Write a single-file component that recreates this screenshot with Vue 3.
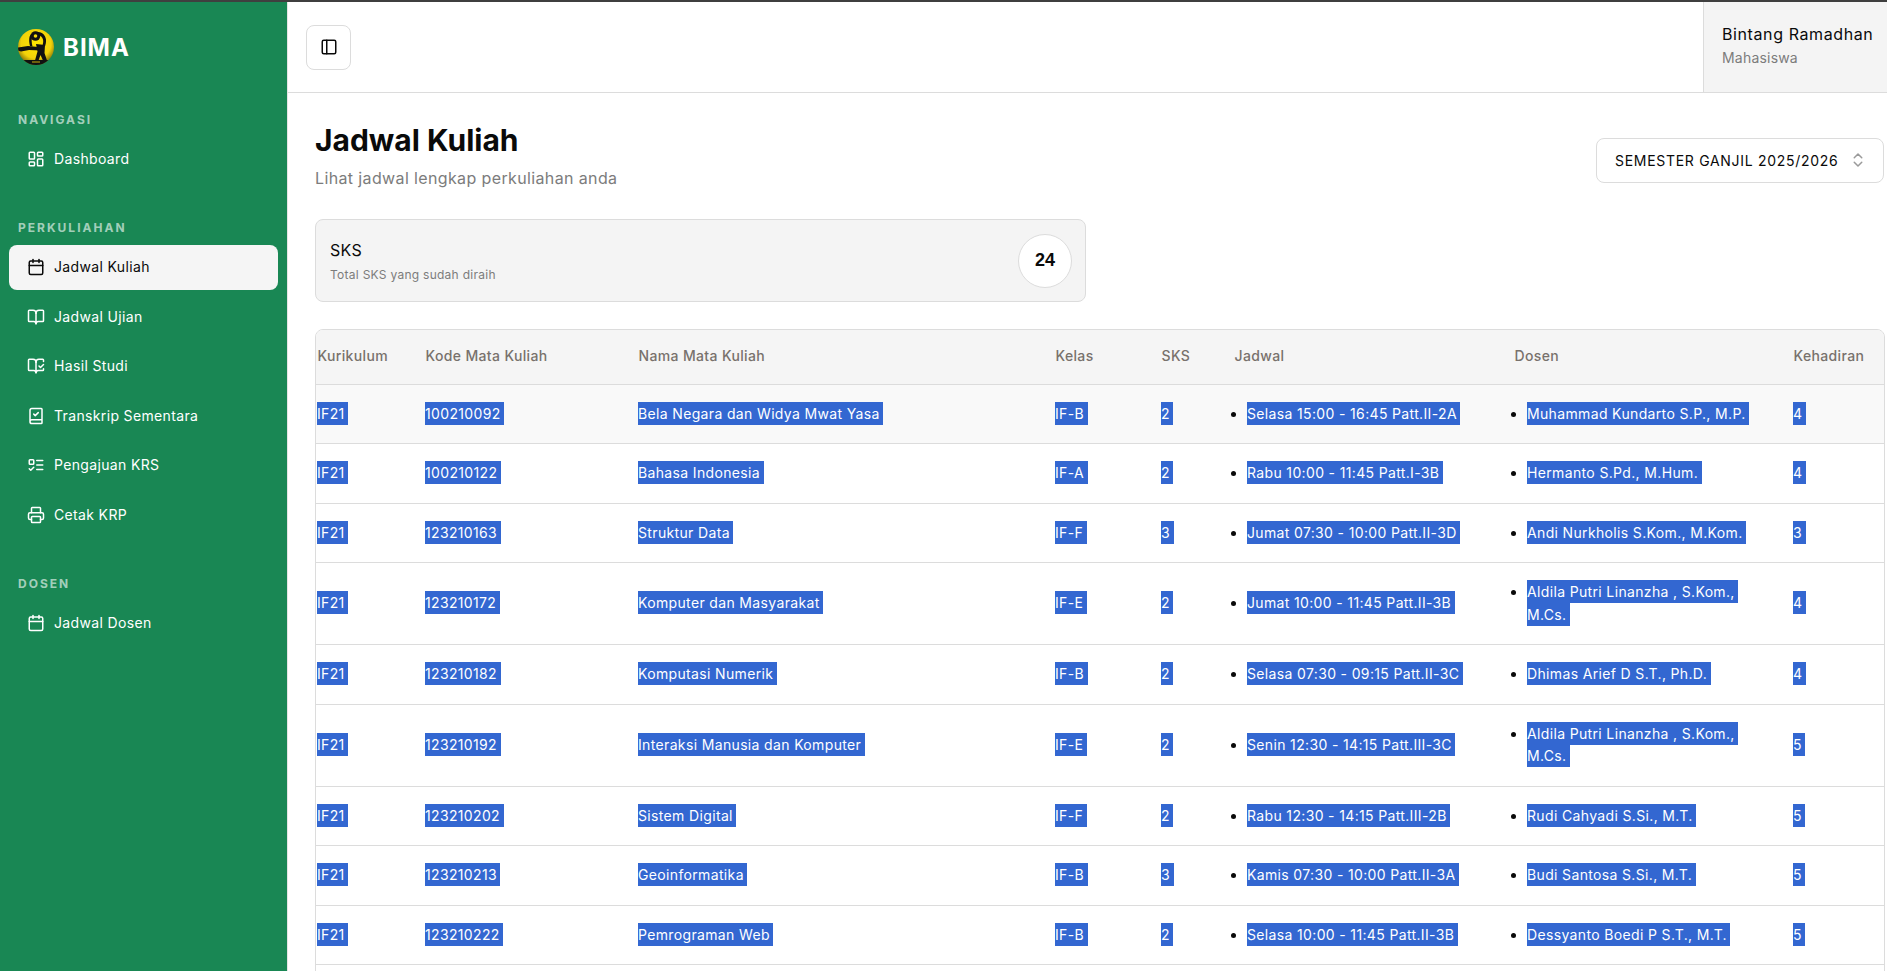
<template>
  <div class="shell">
    <aside class="sidebar">
      <div class="brand">
        <svg class="logo" viewBox="0 0 36 36">
          <defs>
            <radialGradient id="sun" cx="50%" cy="40%" r="58%">
              <stop offset="0%" stop-color="#ffe600" />
              <stop offset="72%" stop-color="#f2d20a" />
              <stop offset="100%" stop-color="#8f7c08" />
            </radialGradient>
            <clipPath id="disc">
              <circle cx="18" cy="18" r="18" />
            </clipPath>
          </defs>
          <circle cx="18" cy="18" r="18" fill="url(#sun)" />
          <g clip-path="url(#disc)" fill="#111">
            <circle cx="17.500" cy="7" r="4.800" />
            <path d="M13 5c-2.500 3-2 8 -1 12l2.500 .5c-1 -4 -1.500 -8 .5 -11z" />
            <path d="M20 3c4 0 7.500 3 8 7.500c.3 3 -.5 5 -1 7l-2.500 -1c.5 -2 1 -4 .5 -6c-.6 -2.500 -3 -4.500 -5.500 -5z" />
            <path d="M0 18.500l10 -1.500l10 1l3 3.500l-12 -.5l-8 1.500l-3 -1z" />
            <path d="M18 15l9 1l-.5 8l2.500 7.500h-4l-2.500 -5.500l-2 5.500h-3.500l2.500 -9z" />
            <rect x="0" y="31" width="36" height="5" />
          </g>
          <circle cx="17.500" cy="7" r="1.800" fill="#f5d90a" />
          <rect x="14" y="32.500" width="8" height="1" fill="#c9ad0a" />
        </svg>
        <span class="brand-name">BIMA</span>
      </div>
      <section v-for="group in menu" :key="group.title" class="nav-group">
        <div class="nav-title">{{ group.title }}</div>
        <a v-for="item in group.items" :key="item.label" class="nav-item" :class="{ active: item.active }">
          <svg class="icon" viewBox="0 0 24 24">
            <template v-for="(s, i) in item.icon" :key="i">
              <rect v-if="s.length === 5" :x="s[0]" :y="s[1]" :width="s[2]" :height="s[3]" :rx="s[4]" />
              <path v-else :d="s" />
            </template>
          </svg>
          <span>{{ item.label }}</span>
        </a>
      </section>
    </aside>

    <div class="main">
      <header class="topbar">
        <button class="toggle">
          <svg class="icon" viewBox="0 0 24 24">
            <rect x="3" y="3" width="18" height="18" rx="2" />
            <path d="M9 3v18" />
          </svg>
        </button>
        <div class="user">
          <div class="user-name">Bintang Ramadhan</div>
          <div class="user-role">Mahasiswa</div>
        </div>
      </header>

      <main class="content">
        <div class="page-head">
          <div>
            <h1>Jadwal Kuliah</h1>
            <p>Lihat jadwal lengkap perkuliahan anda</p>
          </div>
          <button class="semester">
            <span>SEMESTER GANJIL 2025/2026</span>
            <svg class="chev" viewBox="0 0 24 24">
              <path d="m7 15 5 5 5-5" />
              <path d="m7 9 5-5 5 5" />
            </svg>
          </button>
        </div>

        <div class="sks-card">
          <div>
            <div class="sks-title">SKS</div>
            <div class="sks-sub">Total SKS yang sudah diraih</div>
          </div>
          <div class="sks-count">24</div>
        </div>

        <div class="table-card">
          <table>
            <colgroup>
              <col v-for="w in colWidths" :key="w.key" :style="{ width: w.value + 'px' }" />
            </colgroup>
            <thead>
              <tr>
                <th v-for="h in headers" :key="h">{{ h }}</th>
              </tr>
            </thead>
            <tbody>
              <tr v-for="(row, i) in rows" :key="row.kode" :class="{ hover: i === 0 }">
                <td><span class="sel">IF21</span></td>
                <td><span class="sel">{{ row.kode }}</span></td>
                <td><span class="sel">{{ row.nama }}</span></td>
                <td><span class="sel">{{ row.kelas }}</span></td>
                <td><span class="sel">{{ row.sks }}</span></td>
                <td><ul><li><span class="sel">{{ row.jadwal }}</span></li></ul></td>
                <td><ul><li><span class="sel">{{ row.dosen }}</span></li></ul></td>
                <td><span class="sel">{{ row.hadir }}</span></td>
              </tr>
              <tr class="spacer"><td colspan="8"></td></tr>
            </tbody>
          </table>
        </div>
      </main>
    </div>
  </div>
</template>

<script setup>
const calendar = ['M8 2v4', 'M16 2v4', [3, 4, 18, 18, 2], 'M3 10h18']

const menu = [
  {
    title: 'NAVIGASI',
    items: [
      { label: 'Dashboard', icon: [[3, 3, 7, 9, 1], [14, 3, 7, 5, 1], [14, 12, 7, 9, 1], [3, 16, 7, 5, 1]] }
    ]
  },
  {
    title: 'PERKULIAHAN',
    items: [
      { label: 'Jadwal Kuliah', active: true, icon: calendar },
      {
        label: 'Jadwal Ujian',
        icon: ['M12 7v14', 'M3 18a1 1 0 0 1-1-1V4a1 1 0 0 1 1-1h5a4 4 0 0 1 4 4 4 4 0 0 1 4-4h5a1 1 0 0 1 1 1v13a1 1 0 0 1-1 1h-6a3 3 0 0 0-3 3 3 3 0 0 0-3-3z']
      },
      {
        label: 'Hasil Studi',
        icon: ['M12 21V7', 'm16 12 2 2 4-4', 'M22 6V4a1 1 0 0 0-1-1h-5a4 4 0 0 0-4 4 4 4 0 0 0-4-4H3a1 1 0 0 0-1 1v13a1 1 0 0 0 1 1h6a3 3 0 0 1 3 3 3 3 0 0 1 3-3h6a1 1 0 0 0 1-1v-1.300']
      },
      {
        label: 'Transkrip Sementara',
        icon: ['M4 19.500v-15A2.500 2.500 0 0 1 6.500 2H19a1 1 0 0 1 1 1v18a1 1 0 0 1-1 1H6.500a1 1 0 0 1 0-5H20', 'm9 9.500 2 2 4-4']
      },
      {
        label: 'Pengajuan KRS',
        icon: [[3, 5, 6, 6, 1], 'm3 17 2 2 4-4', 'M13 6h8', 'M13 12h8', 'M13 18h8']
      },
      {
        label: 'Cetak KRP',
        icon: ['M6 18H4a2 2 0 0 1-2-2v-5a2 2 0 0 1 2-2h16a2 2 0 0 1 2 2v5a2 2 0 0 1-2 2h-2', 'M6 9V3a1 1 0 0 1 1-1h10a1 1 0 0 1 1 1v6', [6, 14, 12, 8, 1]]
      }
    ]
  },
  {
    title: 'DOSEN',
    items: [{ label: 'Jadwal Dosen', icon: calendar }]
  }
]

const headers = ['Kurikulum', 'Kode Mata Kuliah', 'Nama Mata Kuliah', 'Kelas', 'SKS', 'Jadwal', 'Dosen', 'Kehadiran']
const colWidths = [108, 213, 417, 106, 73, 280, 279, 92].map((value, key) => ({ key, value }))

const aldila = 'Aldila Putri Linanzha , S.Kom., M.Cs.'
const rows = [
  { kode: '100210092', nama: 'Bela Negara dan Widya Mwat Yasa', kelas: 'IF-B', sks: 2, jadwal: 'Selasa 15:00 - 16:45 Patt.II-2A', dosen: 'Muhammad Kundarto S.P., M.P.', hadir: 4 },
  { kode: '100210122', nama: 'Bahasa Indonesia', kelas: 'IF-A', sks: 2, jadwal: 'Rabu 10:00 - 11:45 Patt.I-3B', dosen: 'Hermanto S.Pd., M.Hum.', hadir: 4 },
  { kode: '123210163', nama: 'Struktur Data', kelas: 'IF-F', sks: 3, jadwal: 'Jumat 07:30 - 10:00 Patt.II-3D', dosen: 'Andi Nurkholis S.Kom., M.Kom.', hadir: 3 },
  { kode: '123210172', nama: 'Komputer dan Masyarakat', kelas: 'IF-E', sks: 2, jadwal: 'Jumat 10:00 - 11:45 Patt.II-3B', dosen: aldila, hadir: 4 },
  { kode: '123210182', nama: 'Komputasi Numerik', kelas: 'IF-B', sks: 2, jadwal: 'Selasa 07:30 - 09:15 Patt.II-3C', dosen: 'Dhimas Arief D S.T., Ph.D.', hadir: 4 },
  { kode: '123210192', nama: 'Interaksi Manusia dan Komputer', kelas: 'IF-E', sks: 2, jadwal: 'Senin 12:30 - 14:15 Patt.III-3C', dosen: aldila, hadir: 5 },
  { kode: '123210202', nama: 'Sistem Digital', kelas: 'IF-F', sks: 2, jadwal: 'Rabu 12:30 - 14:15 Patt.III-2B', dosen: 'Rudi Cahyadi S.Si., M.T.', hadir: 5 },
  { kode: '123210213', nama: 'Geoinformatika', kelas: 'IF-B', sks: 3, jadwal: 'Kamis 07:30 - 10:00 Patt.II-3A', dosen: 'Budi Santosa S.Si., M.T.', hadir: 5 },
  { kode: '123210222', nama: 'Pemrograman Web', kelas: 'IF-B', sks: 2, jadwal: 'Selasa 10:00 - 11:45 Patt.II-3B', dosen: 'Dessyanto Boedi P S.T., M.T.', hadir: 5 }
]
</script>

<style>
html,
body {
  margin: 0;
  overflow: hidden;
}
</style>

<style scoped>
.shell {
  display: flex;
  height: 971px;
  box-sizing: border-box;
  border-top: 2px solid #3f3f3f;
  overflow: hidden;
  font-family: Inter, "Liberation Sans", sans-serif;
  font-size: 14px;
  letter-spacing: 0.350px;
  color: #0a0a0a;
  background: #fff;
}
.sidebar {
  flex: 0 0 288px;
  box-sizing: border-box;
  background: #198754;
  border-right: 1px solid #e5e5e5;
  padding: 0 9px;
  color: #fff;
}
.brand {
  display: flex;
  align-items: center;
  gap: 9px;
  height: 36px;
  margin: 27px 0 46px 9px;
}
.logo {
  width: 36px;
  height: 36px;
  flex: none;
}
.brand-name {
  font-size: 24px;
  font-weight: 700;
  letter-spacing: 1px;
}
.nav-group {
  margin-bottom: 37.500px;
}
.nav-title {
  height: 16px;
  line-height: 18px;
  margin: 0 0 9.500px 9px;
  font-size: 12px;
  font-weight: 700;
  letter-spacing: 2px;
  color: rgba(255, 255, 255, 0.62);
}
.nav-item {
  display: flex;
  align-items: center;
  gap: 9px;
  height: 45px;
  margin-bottom: 4.600px;
  padding-left: 18px;
  border-radius: 8px;
  color: #fff;
}
.nav-item span {
  margin-bottom: 1px;
}
.nav-item:last-child {
  margin-bottom: 0;
}
.nav-item.active {
  background: #f5f5f5;
  color: #0a0a0a;
}
.icon {
  width: 18px;
  height: 18px;
  flex: none;
  fill: none;
  stroke: currentColor;
  stroke-width: 2;
  stroke-linecap: round;
  stroke-linejoin: round;
}
.main {
  flex: 1;
  min-width: 0;
  display: flex;
  flex-direction: column;
}
.topbar {
  display: flex;
  align-items: stretch;
  justify-content: space-between;
  height: 90px;
  flex: none;
  border-bottom: 1px solid #dcdcdc;
  padding-left: 18px;
}
.toggle {
  align-self: center;
  width: 45px;
  height: 45px;
  display: flex;
  align-items: center;
  justify-content: center;
  background: #fff;
  border: 1px solid #dcdcdc;
  border-radius: 8px;
  color: #0a0a0a;
  padding: 0;
}
.user {
  width: 184px;
  box-sizing: border-box;
  padding: 0 0 3px 18px;
  display: flex;
  flex-direction: column;
  justify-content: center;
  background: #f4f4f4;
  border-left: 1px solid #dcdcdc;
}
.user-name {
  font-size: 16px;
  line-height: 22px;
  margin-bottom: 3px;
  letter-spacing: 0.600px;
  white-space: nowrap;
}
.user-role {
  font-size: 14px;
  line-height: 20px;
  letter-spacing: 0.200px;
  color: #7c7c7c;
}
.content {
  padding: 29px 0 0 27px;
}
.page-head {
  display: flex;
  justify-content: space-between;
  align-items: flex-start;
}
h1 {
  margin: 0;
  font-size: 30px;
  line-height: 36px;
  font-weight: 700;
  letter-spacing: 0;
}
.page-head p {
  margin: 8px 0 0;
  font-size: 16px;
  line-height: 24px;
  letter-spacing: 0.370px;
  color: #7c7c7c;
}
.semester {
  display: flex;
  align-items: center;
  justify-content: space-between;
  width: 288px;
  height: 45px;
  margin: 16px 3px 0 0;
  box-sizing: border-box;
  padding: 0 16px 1px 18px;
  background: #fff;
  border: 1px solid #dcdcdc;
  border-radius: 8px;
  font: inherit;
  letter-spacing: 0.700px;
  color: #0a0a0a;
  white-space: nowrap;
}
.chev {
  width: 18px;
  height: 18px;
  fill: none;
  stroke: #9a9a9a;
  stroke-width: 2;
  stroke-linecap: round;
  stroke-linejoin: round;
}
.sks-card {
  display: flex;
  align-items: center;
  justify-content: space-between;
  box-sizing: border-box;
  width: 771px;
  height: 83px;
  margin-top: 29px;
  padding: 0 13px 0 14px;
  background: #f4f4f4;
  border: 1px solid #dcdcdc;
  border-radius: 8px;
}
.sks-title {
  font-size: 16px;
  line-height: 24px;
  margin-top: -1px;
}
.sks-sub {
  margin-top: 5px;
  font-size: 12px;
  line-height: 16px;
  letter-spacing: 0.270px;
  color: #7c7c7c;
}
.sks-count {
  width: 54px;
  height: 54px;
  box-sizing: border-box;
  display: flex;
  align-items: center;
  justify-content: center;
  background: #fff;
  border: 1px solid #dcdcdc;
  border-radius: 50%;
  font-family: "Liberation Sans", sans-serif;
  font-size: 18px;
  font-weight: 700;
  letter-spacing: 0;
}
.table-card {
  margin-top: 27px;
  width: 1570px;
  box-sizing: border-box;
  border: 1px solid #dcdcdc;
  border-radius: 8px;
  overflow: hidden;
}
table {
  width: 1568px;
  table-layout: fixed;
  border-collapse: collapse;
}
th {
  padding: 0 0 2px 1.500px;
  text-align: left;
  font-weight: 450;
  color: #78716c;
  background: #f5f5f5;
  border-bottom: 1px solid #dcdcdc;
  box-sizing: border-box;
  height: 54px;
}
td {
  padding: 18px 30px 18px 1px;
  line-height: 22.500px;
  border-bottom: 1px solid #dcdcdc;
  vertical-align: middle;
}
tr.hover td {
  background: #f9f9f9;
}
ul {
  margin: 0;
  padding: 0 0 0 13px;
  list-style: disc;
}
.sel {
  padding: 3px 3.500px 3px 0;
  background: #3367d1;
  color: #fff;
  -webkit-box-decoration-break: clone;
  box-decoration-break: clone;
}
.spacer td {
  height: 40px;
  padding: 0;
}
</style>
